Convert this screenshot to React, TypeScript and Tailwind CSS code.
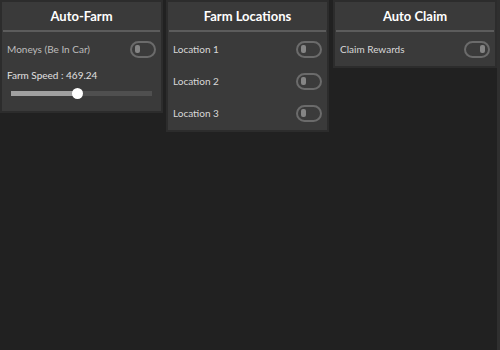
import { useState } from "react";

function Toggle({ on }: { on?: boolean }) {
  return (
    <div className="w-[26px] h-[17px] rounded-full border-2 border-[#6b6b6b] bg-[#3b3b3b] flex items-center px-[3px]">
      <div className={`w-[5px] h-[8px] rounded-[2px] bg-[#858585] ${on ? "ml-auto" : ""}`} />
    </div>
  );
}

function Panel({ title, children }: { title: string; children: React.ReactNode }) {
  return (
    <div className="bg-[#3a3a3a] border-2 border-[#2c2c2c] shrink-0">
      <div className="h-[28px] pt-[2px] flex items-center justify-center text-[13px] font-bold text-white">{title}</div>
      <div className="h-[2px] bg-[#5c5c5c] mx-[1px]" />
      <div className="px-[5px] pt-[1px] pb-[1px]">{children}</div>
    </div>
  );
}

function Row({ label, on }: { label: string; on?: boolean }) {
  return (
    <div className="h-[32px] flex items-center justify-between text-[10px] text-[#d8d8d8]">
      <span>{label}</span>
      <Toggle on={on} />
    </div>
  );
}

export default function App() {
  const [speed] = useState(469.24);
  const pct = 47;

  return (
    <div className="w-[500px] h-[350px] bg-[#212121] flex items-start font-['Lato',sans-serif]">
      <div className="w-[163px] shrink-0">
        <Panel title="Auto-Farm">
          <div className="h-[32px] flex items-center justify-between text-[10px] text-[#bdbdbd]">
            <span>Moneys (Be In Car)</span>
            <Toggle />
          </div>
          <div className="mt-[3px] text-[10px] text-[#e0e0e0] leading-[14px]">Farm Speed : {speed}</div>
          <div className="relative mt-[5px] mx-[4px] h-[12px] flex items-center">
            <div className="w-full h-[5px] bg-[#4f4f4f]" />
            <div className="absolute left-0 h-[5px] bg-[#a0a0a0]" style={{ width: `${pct}%` }} />
            <div className="absolute w-[11px] h-[11px] rounded-full bg-white -ml-[5px]" style={{ left: `${pct}%` }} />
          </div>
          <div className="h-[11px]" />
        </Panel>
      </div>
      <div className="w-[163px] ml-[3px] shrink-0">
        <Panel title="Farm Locations">
          <Row label="Location 1" />
          <Row label="Location 2" />
          <Row label="Location 3" />
        </Panel>
      </div>
      <div className="w-[164px] ml-[4px] shrink-0">
        <Panel title="Auto Claim">
          <Row label="Claim Rewards" on />
        </Panel>
      </div>
      <div className="ml-auto w-[3px] h-full bg-[#2f2f2f]" />
    </div>
  );
}
